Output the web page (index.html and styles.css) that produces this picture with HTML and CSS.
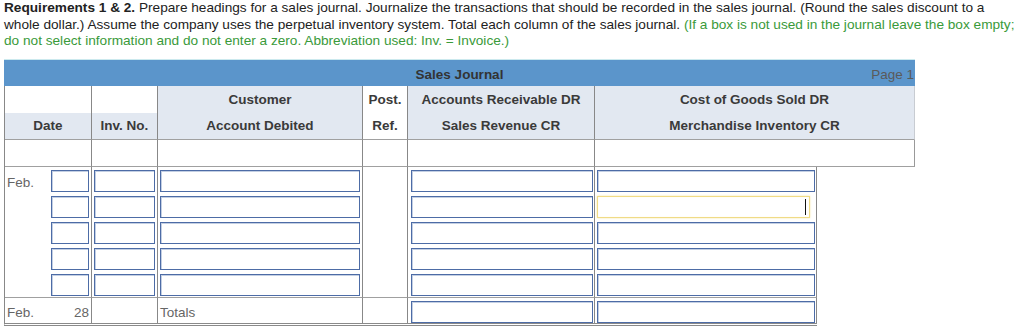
FILE: index.html
```html
<!DOCTYPE html>
<html>
<head>
<meta charset="utf-8">
<link rel="stylesheet" href="styles.css">
</head>
<body>
<div class="page">
  <p class="intro"><b>Requirements 1 &amp; 2.</b> Prepare headings for a sales journal. Journalize the transactions that should be recorded in the sales journal. (Round the sales discount to a whole dollar.) Assume the company uses the perpetual inventory system. Total each column of the sales journal. <span class="hint">(If a box is not used in the journal leave the box empty; do not select information and do not enter a zero. Abbreviation used: Inv. = Invoice.)</span></p>
  <div class="rule"></div>
  <div class="journal">
    <div class="titlebar">
      <span class="title">Sales Journal</span>
      <span class="pageno">Page 1</span>
    </div>
    <div class="grid head">
      <div class="hc split"><div class="l1"></div><div class="l2 tint">Date</div></div>
      <div class="hc split"><div class="l1"></div><div class="l2 tint">Inv. No.</div></div>
      <div class="hc tint"><div class="l1">Customer</div><div class="l2">Account Debited</div></div>
      <div class="hc"><div class="l1">Post.</div><div class="l2">Ref.</div></div>
      <div class="hc tint"><div class="l1">Accounts Receivable DR</div><div class="l2">Sales Revenue CR</div></div>
      <div class="hc tint last"><div class="l1">Cost of Goods Sold DR</div><div class="l2">Merchandise Inventory CR</div></div>
    </div>
    <div class="grid head blank">
      <div class="bc"></div><div class="bc"></div><div class="bc"></div><div class="bc"></div><div class="bc"></div><div class="bc last"></div>
    </div>
    <div class="grid body">
      <div class="c date"><span class="lbl">Feb.</span><div class="box dbox"></div></div>
      <div class="c inv"><div class="box"></div></div>
      <div class="c cust"><div class="box"></div></div>
      <div class="c post"></div>
      <div class="c ar"><div class="box"></div></div>
      <div class="c cogs"><div class="box"></div></div>

      <div class="c date"><div class="box dbox"></div></div>
      <div class="c inv"><div class="box"></div></div>
      <div class="c cust"><div class="box"></div></div>
      <div class="c post"></div>
      <div class="c ar"><div class="box"></div></div>
      <div class="c cogs"><div class="box focus"><span class="caret"></span></div></div>

      <div class="c date"><div class="box dbox"></div></div>
      <div class="c inv"><div class="box"></div></div>
      <div class="c cust"><div class="box"></div></div>
      <div class="c post"></div>
      <div class="c ar"><div class="box"></div></div>
      <div class="c cogs"><div class="box"></div></div>

      <div class="c date"><div class="box dbox"></div></div>
      <div class="c inv"><div class="box"></div></div>
      <div class="c cust"><div class="box"></div></div>
      <div class="c post"></div>
      <div class="c ar"><div class="box"></div></div>
      <div class="c cogs"><div class="box"></div></div>

      <div class="c date"><div class="box dbox"></div></div>
      <div class="c inv"><div class="box"></div></div>
      <div class="c cust"><div class="box"></div></div>
      <div class="c post"></div>
      <div class="c ar"><div class="box"></div></div>
      <div class="c cogs"><div class="box"></div></div>

      <div class="c date tot"><span class="lbl">Feb.</span><span class="day">28</span></div>
      <div class="c inv tot"></div>
      <div class="c cust tot"><span class="lbl">Totals</span></div>
      <div class="c post tot"></div>
      <div class="c ar tot"><div class="box"></div></div>
      <div class="c cogs tot"><div class="box"></div></div>
    </div>
  </div>
</div>
</body>
</html>
```

FILE: styles.css
```css
* { box-sizing: border-box; }
html, body { margin: 0; padding: 0; background: #fff; }
body {
  font-family: "Liberation Sans", Arial, sans-serif;
  font-size: 13.5px;
  color: #222;
}
.page { padding: 0 0 0 4px; width: 1024px; }
.intro {
  margin: 0 0 9px 0;
  font-size: 13.65px;
  line-height: 16.7px;
  width: 1019px;
}
.intro b { font-weight: bold; }
.hint { color: #3a9a3a; }
.rule {
  width: 911px;
  height: 1px;
  background: #cbe9ee;
}
.journal { width: 911px; }
.titlebar {
  height: 26px;
  background: #5b95cb;
  display: grid;
  grid-template-columns: 1fr auto 1fr;
  align-items: center;
  padding-top: 3px;
}
.title {
  grid-column: 2;
  font-weight: bold;
  color: #333;
}
.pageno {
  grid-column: 3;
  justify-self: end;
  color: #5a5a5a;
  padding-right: 1px;
}
.grid {
  display: grid;
  border-left: 1px solid #888;
}
.head {
  grid-template-columns: 87px 66px 205px 45px 187px 320px;
}
.hc {
  border-right: 1px solid #888;
  border-bottom: 1px solid #a0a0a0;
  height: 54px;
  font-weight: bold;
  color: #3a3a3a;
  text-align: center;
}
.hc .l1 { height: 27px; line-height: 28px; }
.hc .l2 { height: 26px; line-height: 26px; }
.tint { background: #e2e8f1; }
.split { background: #fff; }
.hc.last { border-right: 1px solid #c8ccd2; }
.blank .bc {
  height: 27px;
  border-right: 1px solid #888;
  border-bottom: 1px solid #a0a0a0;
}
.blank .bc.last { border-right: 1px solid #999; }
.body {
  width: 813px;
  grid-template-columns: 87px 66px 205px 45px 187px 222px;
  grid-template-rows: repeat(5, 26px) 26px;
  border-bottom: 3px double #8a8a8a;
}
.c {
  border-right: 1px solid #888;
  display: flex;
  align-items: flex-start;
  padding-top: 3px;
}
.c.tot { border-top: 1px solid #a0a0a0; }
.box {
  height: 22px;
  width: 100%;
  border: 1px solid #4d6ca6;
  box-shadow: inset 1px 1px 0 #c3cfe3;
  background: #fff;
}
.date { padding-left: 2px; padding-right: 2px; }
.date .dbox { width: 38px; margin-left: auto; }
.date .lbl { color: #666; padding-top: 5px; }
.inv { padding-left: 2px; padding-right: 2px; }
.cust { padding-left: 2px; padding-right: 2px; }
.ar { padding-left: 3px; padding-right: 1px; }
.cogs { padding-left: 2px; padding-right: 1px; }
.box.focus {
  width: 213px;
  border: 1px solid #f0db86;
  box-shadow: 0 0 2px #f5e7a4, inset 0 0 1px #f8eec0;
  display: flex;
  justify-content: flex-end;
  align-items: center;
  padding-right: 3px;
}
.caret {
  width: 1px;
  height: 16px;
  background: #111;
}
.tot { align-items: center; padding-top: 4px; }
.tot .lbl, .tot .day { color: #666; padding-top: 0; }
.date.tot { justify-content: space-between; padding-left: 2px; padding-right: 2px; }
.cust.tot .lbl { color: #666; }
.ar.tot, .cogs.tot { align-items: flex-start; padding-top: 3px; }
.ar.tot .box, .cogs.tot .box { height: 22px; }
```
